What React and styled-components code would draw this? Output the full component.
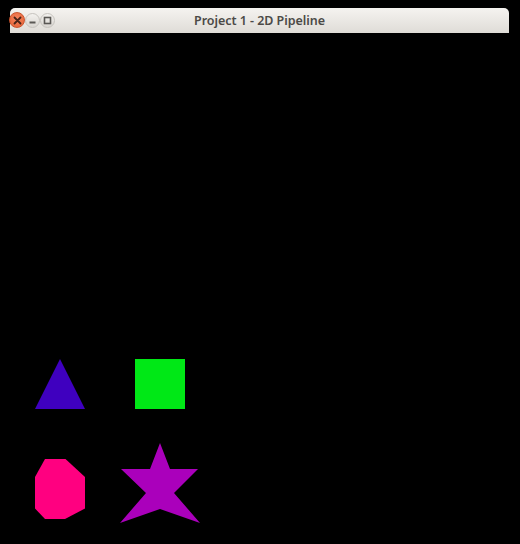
import React from 'react'
import styled, { createGlobalStyle } from 'styled-components'

const Global = createGlobalStyle`
  html, body {
    margin: 0;
    padding: 0;
    background: #000;
  }
`

const Screen = styled.div`
  width: 520px;
  height: 544px;
  background: #000;
  padding: 8px 11px 0 10px;
  box-sizing: border-box;
  display: flex;
  flex-direction: column;
  overflow: hidden;
`

const TitleBar = styled.div`
  height: 25px;
  flex: none;
  display: grid;
  grid-template-columns: 60px 1fr 60px;
  align-items: center;
  background: linear-gradient(#f5f3f0, #dfdcd7);
  border-radius: 5px 5px 0 0;
  font-family: "Noto Sans", "DejaVu Sans", sans-serif;
`

const Controls = styled.div`
  display: flex;
  align-items: center;
  margin-left: -1px;
  margin-top: -1px;
`

const Circle = styled.div`
  width: ${({ kind }) => (kind === 'close' ? '16px' : '15px')};
  height: ${({ kind }) => (kind === 'close' ? '16px' : '15px')};
  border-radius: 50%;
  box-sizing: border-box;
  display: flex;
  align-items: center;
  justify-content: center;
  background: ${({ kind }) =>
    kind === 'close'
      ? 'radial-gradient(circle at 50% 40%, #f6865f, #e45f33)'
      : 'linear-gradient(#f3f1ee, #d9d6d1)'};
  border: 1px solid ${({ kind }) => (kind === 'close' ? '#c9552f' : '#c6c3be')};
`

const Title = styled.div`
  text-align: center;
  font-size: 12.5px;
  font-weight: 600;
  color: #4c4a47;
  letter-spacing: -0.05px;
`

const Canvas = styled.svg`
  display: block;
  flex: 1;
  width: 100%;
  background: #000;
`

export default function App() {
  // shape coordinates, relative to the client area (origin at 10,33)
  const ox = 10
  const oy = 33
  const pts = (list) => list.map(([x, y]) => `${x - ox},${y - oy}`).join(' ')

  return (
    <>
      <Global />
      <Screen>
        <TitleBar>
          <Controls>
            <Circle kind="close">
              <svg width="9" height="9" viewBox="0 0 9 9">
                <path d="M1.5 1.5 L7.5 7.5 M7.5 1.5 L1.5 7.5" stroke="#4a2418" strokeWidth="1.8" strokeLinecap="round" />
              </svg>
            </Circle>
            <Circle>
              <svg width="9" height="9" viewBox="0 0 9 9">
                <rect x="1.5" y="5.5" width="6" height="2" fill="#5a5855" />
              </svg>
            </Circle>
            <Circle>
              <svg width="9" height="9" viewBox="0 0 9 9">
                <rect x="1.5" y="1.5" width="6" height="6" fill="none" stroke="#5a5855" strokeWidth="1.6" />
              </svg>
            </Circle>
          </Controls>
          <Title>Project 1 - 2D Pipeline</Title>
          <div />
        </TitleBar>
        <Canvas viewBox="0 0 499 511">
          <polygon points={pts([[60, 359], [85, 409], [35, 409]])} fill="#3f00bf" />
          <rect x={135 - ox} y={359 - oy} width="50" height="50" fill="#00e816" />
          <polygon
            points={pts([[45, 459], [65.5, 459], [85, 477], [85, 508.5], [65, 519], [45, 519], [35, 508.5], [35, 477]])}
            fill="#ff0080"
          />
          <polygon
            points={pts([
              [160, 443], [170, 469], [198, 469], [174, 493], [200, 523],
              [160, 509], [120, 523], [146, 493], [121, 469], [150, 469],
            ])}
            fill="#aa00bb"
          />
        </Canvas>
      </Screen>
    </>
  )
}
